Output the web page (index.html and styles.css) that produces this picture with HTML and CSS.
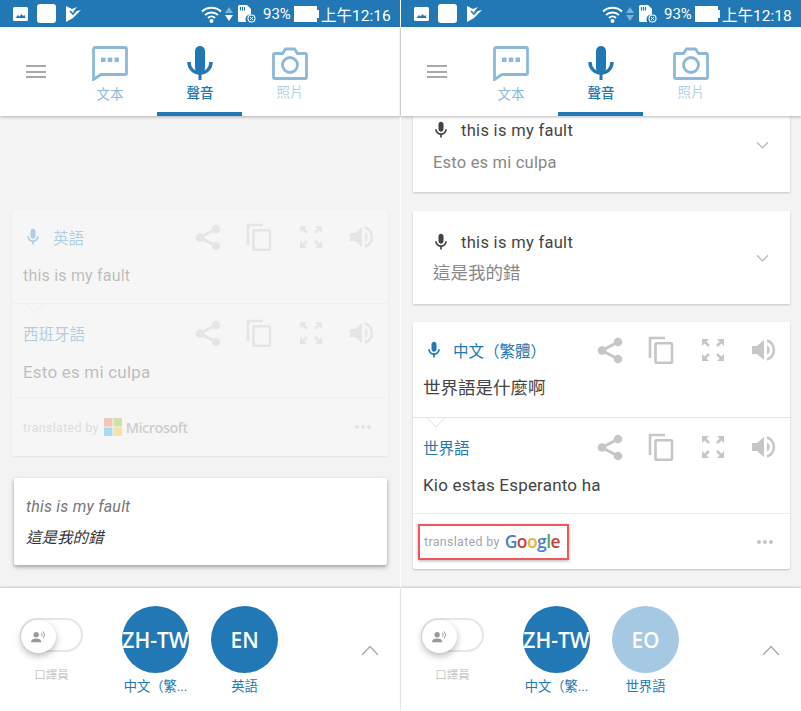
FILE: index.html
```html
<!DOCTYPE html>
<html lang="zh-Hant">
<head>
<meta charset="utf-8">
<title>Translator</title>
<link rel="stylesheet" href="styles.css">
</head>
<body>
<svg class="defs" aria-hidden="true">
  <symbol id="i-share" viewBox="0 0 26 28"><path d="M21 6 5 14.500 21 23" fill="none" stroke="currentColor" stroke-width="3"/><circle cx="5" cy="14.500" r="4.300" fill="currentColor"/><circle cx="21" cy="6" r="4.300" fill="currentColor"/><circle cx="21" cy="23" r="4.300" fill="currentColor"/></symbol>
  <symbol id="i-copy" viewBox="0 0 26 28"><path d="M2 22V2h15" fill="none" stroke="currentColor" stroke-width="2.600"/><rect x="7.500" y="7.300" width="16.500" height="19.500" fill="none" stroke="currentColor" stroke-width="2.600" rx="1"/></symbol>
  <symbol id="i-full" viewBox="0 0 26 26"><g fill="currentColor" stroke="currentColor"><path d="M2 2h7L2 9z" stroke="none"/><path d="M3 3l6 6" stroke-width="2.500"/><path d="M24 2h-7l7 7z" stroke="none"/><path d="M23 3l-6 6" stroke-width="2.500"/><path d="M2 24h7l-7-7z" stroke="none"/><path d="M3 23l6-6" stroke-width="2.500"/><path d="M24 24h-7l7-7z" stroke="none"/><path d="M23 23l-6-6" stroke-width="2.500"/></g></symbol>
  <symbol id="i-vol" viewBox="0 0 26 26"><path d="M1 9h5l7-6v20l-7-6H1z" fill="currentColor"/><path d="M16 8.500a5 5 0 0 1 0 9z" fill="currentColor"/><path d="M16 3.500a10 10 0 0 1 0 19" fill="none" stroke="currentColor" stroke-width="2.600"/></symbol>
  <symbol id="i-mic" viewBox="0 0 24 24"><path d="M12 14c1.660 0 3-1.340 3-3V5c0-1.660-1.340-3-3-3S9 3.340 9 5v6c0 1.660 1.340 3 3 3zm5-3c0 2.760-2.240 5-5 5s-5-2.240-5-5H5c0 3.530 2.610 6.430 6 6.920V21h2v-3.080c3.390-.49 6-3.390 6-6.920h-2z" fill="currentColor"/></symbol>
  <symbol id="i-chat" viewBox="0 0 36 35"><path d="M3 1.500h30a1.500 1.500 0 0 1 1.500 1.500v24a1.500 1.500 0 0 1-1.500 1.500H9l-7.500 5V3A1.500 1.500 0 0 1 3 1.500z" fill="none" stroke="currentColor" stroke-width="2.800"/><path d="M9 11.500h4.500V16H9zM15.800 11.500h4.500V16h-4.500zM22.500 11.500H27V16h-4.500z" fill="currentColor"/></symbol>
  <symbol id="i-tabmic" viewBox="0 0 26 34"><rect x="8" y="0" width="10" height="27" rx="5" fill="currentColor"/><path d="M2 16c0 7 5 11 11 11s11-4 11-11" fill="none" stroke="currentColor" stroke-width="3.400"/><path d="M13 26v8" stroke="currentColor" stroke-width="3"/></symbol>
  <symbol id="i-cam" viewBox="0 0 36 33"><path d="M3 6.500h7.500l3-4.500h9l3 4.500H33a1.500 1.500 0 0 1 1.500 1.500v22a1.500 1.500 0 0 1-1.500 1.500H3A1.500 1.500 0 0 1 1.500 30V8A1.500 1.500 0 0 1 3 6.500z" fill="none" stroke="currentColor" stroke-width="2.800"/><circle cx="18" cy="18" r="7.500" fill="none" stroke="currentColor" stroke-width="2.800"/></symbol>
  <symbol id="i-pic" viewBox="0 0 15 14"><rect width="15" height="14" rx="1.500" fill="#fff"/><path d="M2.500 11l2.500-3 1.500 1.500L8.500 7l1.500 2 1.500-1 1 3z" fill="#2178b5"/></symbol>
  <symbol id="i-flag" viewBox="0 0 15 16"><path d="M0 0l6 3 5-2-4 5 8-2-8 8-7 4z" fill="#fff"/><path d="M4 5l3 3 6-7" fill="none" stroke="#2178b5" stroke-width="1.600"/></symbol>
  <symbol id="i-wifi" viewBox="0 0 21 18"><path d="M1 6.500a14 14 0 0 1 19 0M4 10a9.500 9.500 0 0 1 13 0M7 13a5 5 0 0 1 7 0" fill="none" stroke="#fff" stroke-width="2"/><circle cx="10.500" cy="16" r="2" fill="#fff"/></symbol>
  <symbol id="i-sd" viewBox="0 0 18 18"><path d="M0 1.500A1.500 1.500 0 0 1 1.500 0H9l4 4v5.500A5 5 0 0 0 8 17H1.500A1.500 1.500 0 0 1 0 15.500z" fill="#fff"/><path d="M2.500 2v3.500M4.500 2v3.500M6.500 2v3.500" stroke="#2178b5" stroke-width="1.200"/><circle cx="13.500" cy="13.500" r="3.500" fill="none" stroke="#fff" stroke-width="1.100"/><path d="M12 12l3 3M15 12l-3 3" stroke="#fff"/></symbol>
  <symbol id="i-person" viewBox="0 0 16 12"><circle cx="5.500" cy="3.500" r="2.800" fill="currentColor"/><path d="M0 11.500c0-3 3-4 5.500-4s5.500 1 5.500 4z" fill="currentColor"/><path d="M11 1.500a3 3 0 0 1 0 4M13 0a6 6 0 0 1 0 7.500" fill="none" stroke="currentColor"/></symbol>
</svg>

<section class="phone">
  <header class="status">
    <svg class="st-pic"><use href="#i-pic"/></svg>
    <span class="st-square"></span>
    <svg class="st-flag"><use href="#i-flag"/></svg>
    <svg class="st-wifi"><use href="#i-wifi"/></svg>
    <span class="st-arrows"><i class="up dim"></i><i class="down"></i></span>
    <svg class="st-sd"><use href="#i-sd"/></svg>
    <span class="st-pct">93%</span>
    <span class="st-batt"></span>
    <span class="st-time">上午12:16</span>
  </header>
  <nav class="tabs">
    <span class="burger"><i></i><i></i><i></i></span>
    <div class="tab tab-text"><svg class="ic-chat"><use href="#i-chat"/></svg><span>文本</span></div>
    <div class="tab tab-on"><svg class="ic-tabmic"><use href="#i-tabmic"/></svg><span>聲音</span></div>
    <div class="tab tab-photo"><svg class="ic-cam"><use href="#i-cam"/></svg><span>照片</span></div>
  </nav>
  <main class="content content-left">
    <article class="card faded compact">
      <div class="row"><svg class="mic"><use href="#i-mic"/></svg><span class="lang">英語</span>
        <span class="tools"><svg><use href="#i-share"/></svg><svg><use href="#i-copy"/></svg><svg><use href="#i-full"/></svg><svg><use href="#i-vol"/></svg></span></div>
      <p class="phrase">this is my fault</p>
      <div class="notched row row2"><span class="lang lang-flush">西班牙語</span>
        <span class="tools"><svg><use href="#i-share"/></svg><svg><use href="#i-copy"/></svg><svg><use href="#i-full"/></svg><svg><use href="#i-vol"/></svg></span></div>
      <p class="phrase phrase-lg">Esto es mi culpa</p>
      <footer class="foot foot-tall">
        <span class="credit"><span class="by">translated by</span>
          <svg class="ms" viewBox="0 0 18 18"><rect width="8.500" height="8.500" fill="#e8603c"/><rect x="9.500" width="8.500" height="8.500" fill="#7fba00"/><rect y="9.500" width="8.500" height="8.500" fill="#00a4ef"/><rect x="9.500" y="9.500" width="8.500" height="8.500" fill="#ffb900"/></svg>
          <span class="ms-word">Microsoft</span></span>
        <span class="dots"><i></i><i></i><i></i></span>
      </footer>
    </article>
    <article class="prompt">
      <p class="prompt-en">this is my fault</p>
      <p class="prompt-zh">這是我的錯</p>
    </article>
  </main>
  <footer class="bar">
    <div class="toggle-wrap"><span class="toggle"><span class="knob"><svg><use href="#i-person"/></svg></span></span><span class="toggle-label">口譯員</span></div>
    <div class="langs">
      <div class="lang-item"><span class="circle">ZH-TW</span><span class="lang-name">中文（繁...</span></div>
      <div class="lang-item"><span class="circle">EN</span><span class="lang-name">英語</span></div>
    </div>
    <svg class="chev" viewBox="0 0 18 11"><path d="M1 10l8-8.500L17 10" fill="none" stroke="currentColor" stroke-width="1.400"/></svg>
  </footer>
</section>

<section class="phone">
  <header class="status">
    <svg class="st-pic"><use href="#i-pic"/></svg>
    <span class="st-square"></span>
    <svg class="st-flag"><use href="#i-flag"/></svg>
    <svg class="st-wifi"><use href="#i-wifi"/></svg>
    <span class="st-arrows"><i class="up dim"></i><i class="down dim"></i></span>
    <svg class="st-sd"><use href="#i-sd"/></svg>
    <span class="st-pct">93%</span>
    <span class="st-batt"></span>
    <span class="st-time">上午12:18</span>
  </header>
  <nav class="tabs">
    <span class="burger"><i></i><i></i><i></i></span>
    <div class="tab tab-text"><svg class="ic-chat"><use href="#i-chat"/></svg><span>文本</span></div>
    <div class="tab tab-on"><svg class="ic-tabmic"><use href="#i-tabmic"/></svg><span>聲音</span></div>
    <div class="tab tab-photo"><svg class="ic-cam"><use href="#i-cam"/></svg><span>照片</span></div>
  </nav>
  <main class="content">
    <article class="mini mini-cut">
      <div class="mini-body"><div class="mini-head"><svg class="mic mic-dark"><use href="#i-mic"/></svg><span>this is my fault</span></div><p class="mini-text">Esto es mi culpa</p></div>
      <svg class="mini-chev" viewBox="0 0 14 8"><path d="M1 1l6 6 6-6" fill="none" stroke="currentColor" stroke-width="1.300"/></svg>
    </article>
    <article class="mini">
      <div class="mini-body"><div class="mini-head"><svg class="mic mic-dark"><use href="#i-mic"/></svg><span>this is my fault</span></div><p class="mini-text mini-zh">這是我的錯</p></div>
      <svg class="mini-chev" viewBox="0 0 14 8"><path d="M1 1l6 6 6-6" fill="none" stroke="currentColor" stroke-width="1.300"/></svg>
    </article>
    <article class="card">
      <div class="row"><svg class="mic"><use href="#i-mic"/></svg><span class="lang">中文（繁體）</span>
        <span class="tools"><svg><use href="#i-share"/></svg><svg><use href="#i-copy"/></svg><svg><use href="#i-full"/></svg><svg><use href="#i-vol"/></svg></span></div>
      <p class="phrase phrase-zh">世界語是什麼啊</p>
      <div class="notched row row2"><span class="lang lang-flush">世界語</span>
        <span class="tools"><svg><use href="#i-share"/></svg><svg><use href="#i-copy"/></svg><svg><use href="#i-full"/></svg><svg><use href="#i-vol"/></svg></span></div>
      <p class="phrase phrase-lg">Kio estas Esperanto ha</p>
      <footer class="foot">
        <span class="credit credit-boxed"><span class="by">translated by</span>
          <span class="google"><b class="g-b">G</b><b class="g-r">o</b><b class="g-y">o</b><b class="g-b">g</b><b class="g-g">l</b><b class="g-r">e</b></span></span>
        <span class="dots"><i></i><i></i><i></i></span>
      </footer>
    </article>
  </main>
  <footer class="bar">
    <div class="toggle-wrap"><span class="toggle"><span class="knob"><svg><use href="#i-person"/></svg></span></span><span class="toggle-label">口譯員</span></div>
    <div class="langs">
      <div class="lang-item"><span class="circle">ZH-TW</span><span class="lang-name">中文（繁...</span></div>
      <div class="lang-item"><span class="circle circle-light">EO</span><span class="lang-name">世界語</span></div>
    </div>
    <svg class="chev" viewBox="0 0 18 11"><path d="M1 10l8-8.500L17 10" fill="none" stroke="currentColor" stroke-width="1.400"/></svg>
  </footer>
</section>
</body>
</html>
```

FILE: styles.css
```css
* { box-sizing: border-box; }
html, body { margin: 0; height: 100%; background: #fff; }
body {
  display: flex;
  gap: 1px;
  width: 801px;
  height: 711px;
  overflow: hidden;
  font-family: Roboto, "Noto Sans CJK TC", sans-serif;
}
.defs { width: 0; height: 0; position: absolute; }
p { margin: 0; }
i { display: block; }

.phone { width: 400px; height: 711px; display: flex; flex-direction: column; flex: none; }

/* status bar */
.status {
  height: 27px; flex: none; background: #2178b5; color: #fff;
  display: flex; align-items: center; padding-left: 13px;
}
.st-pic { width: 15px; height: 14px; margin-top: 1px; }
.st-square { width: 19px; height: 19px; background: #fff; border-radius: 3px; margin-left: 9px; }
.st-flag { width: 15px; height: 16px; margin-left: 10px; }
.st-wifi { width: 21px; height: 18px; margin-left: 120px; }
.st-arrows { display: flex; flex-direction: column; gap: 2px; margin-left: 3px; width: 8px; }
.st-arrows .up { border: 4px solid transparent; border-top: 0; border-bottom: 6px solid #fff; }
.st-arrows .down { border: 4px solid transparent; border-bottom: 0; border-top: 6px solid #fff; }
.st-arrows .dim.up { border-bottom-color: #7fb0d5; }
.st-arrows .dim.down { border-top-color: #7fb0d5; }
.st-sd { width: 18px; height: 18px; margin-left: 5px; }
.st-pct { font-size: 15px; margin-left: 7px; width: 31px; }
.st-batt { width: 23px; height: 16px; background: #fff; position: relative; margin-right: 4px; }
.st-batt::after { content: ""; position: absolute; left: 23px; top: 4px; width: 2px; height: 8px; background: #fff; }
.st-time { font-size: 15.500px; white-space: nowrap; }

/* tab bar */
.tabs {
  height: 89px; flex: none; background: #fff; display: flex; padding-left: 26px;
  position: relative; z-index: 2; box-shadow: 0 1px 3px rgba(0,0,0,.28);
}
.burger { width: 20px; margin-top: 38px; margin-right: 19px; display: flex; flex-direction: column; gap: 3.500px; }
.burger i { height: 2px; background: #a8a8a8; }
.tab { width: 90px; display: flex; flex-direction: column; align-items: center; font-size: 13.500px; position: relative; }
.tab-text { color: #8db8d8; }
.tab-text span { margin-top: 2px; }
.ic-chat { width: 36px; height: 35px; margin-top: 19px; }
.tab-on { color: #2178b5; font-weight: 500; }
.tab-on::after { content: ""; position: absolute; left: 2px; right: 3px; bottom: 0; height: 4px; background: #2178b5; }
.ic-tabmic { width: 26px; height: 34px; margin-top: 19px; }
.tab-on span { margin-top: 2px; }
.tab-photo { color: #8db8d8; }
.tab-photo span { color: #b3cfe3; margin-top: 1px; }
.ic-cam { width: 36px; height: 33px; margin-top: 20px; }

/* content area */
.content {
  flex: 1; min-height: 0; background: #f3f3f3; overflow: hidden;
  padding: 0 11px 0 12px; display: flex; flex-direction: column;
}
.content-left { padding: 94px 12px 0; }

.card { background: #fff; box-shadow: 0 1px 2px rgba(0,0,0,.22); border-radius: 2px; height: 247px; margin-top: 18px; flex: none; }
.card.faded { opacity: .3; margin-top: 0; height: 246px; }
.row { display: flex; align-items: center; height: 56px; padding: 0 13px 0 11px; }
.row2 { height: 58px; }
.compact .row { height: 53px; }
.compact .row2 { height: 59px; }
.mic { width: 20px; height: 20px; color: #2178b5; flex: none; }
.lang { color: #2178b5; font-size: 15.500px; margin-left: 9px; }
.lang-flush { margin-left: -1px; }
.compact .lang { margin-left: 10px; }
.compact .lang-flush { margin-left: 0; }
.tools { margin-left: auto; display: flex; gap: 25.500px; color: #c6c6c6; }
.tools svg { width: 26px; height: 28px; display: block; }
.phrase { font-size: 16px; line-height: 20px; color: #444; padding: 0 11px; height: 39px; letter-spacing: .2px; }
.phrase-zh { font-size: 17.500px; letter-spacing: 0; padding-left: 10px; }
.phrase-lg { font-size: 17px; height: 38px; padding-left: 10px; }
.compact .phrase { height: 40px; padding-top: 3px; }
.compact .phrase-lg { height: 35px; padding: 0 11px; }
.notched { border-top: 1px solid #e6e6e6; position: relative; }
.notched::before {
  content: ""; position: absolute; left: 16px; top: -1px; width: 13px; height: 13px;
  background: #fff; border: 1px solid #e0e0e0; border-top: 0; border-left: 0;
  transform: translateY(-6px) rotate(45deg); clip-path: polygon(100% 0, 100% 100%, 0 100%);
}
.foot {
  border-top: 1px solid #ececec; height: 56px; display: flex; align-items: center;
  justify-content: space-between; padding: 0 17px 0 5px;
}
.foot-tall { height: 59px; padding-left: 11px; }
.credit { display: flex; align-items: center; gap: 5px; white-space: nowrap; }
.credit-boxed { border: 2px solid #f0575a; height: 36px; padding: 0 0 0 4px; width: 151px; box-shadow: 0 1px 3px rgba(0,0,0,.3); }
.by { font-size: 12.500px; color: #a6a6a6; letter-spacing: .3px; }
.ms { width: 18px; height: 18px; }
.ms-word { font-family: "Open Sans", sans-serif; font-size: 14.500px; font-weight: 600; color: #777; letter-spacing: -.5px; margin-left: -1px; }
.google { font-family: "Open Sans", sans-serif; font-size: 17.500px; line-height: 1; letter-spacing: -.6px; }
.google b { font-weight: 600; }
.g-b { color: #4a7fcb; }
.g-r { color: #c8423b; }
.g-y { color: #e7b52c; }
.g-g { color: #55a35c; }
.dots { display: flex; gap: 2px; }
.dots i { width: 4px; height: 4px; border-radius: 50%; background: #c4c4c4; }

/* collapsed rows */
.mini {
  background: #fff; box-shadow: 0 1px 2px rgba(0,0,0,.2); height: 93px; margin-top: 19px; flex: none;
  display: flex; align-items: center; justify-content: space-between; padding: 0 21px 0 20px;
}
.mini-cut { height: 76px; margin-top: 0; align-items: flex-start; }
.mini-cut .mini-body { margin-top: 2px; }
.mini-cut .mini-chev { margin-top: 25px; }
.mini-cut .mini-text { margin-top: 9px; }
.mini-head { display: flex; align-items: center; height: 24px; font-size: 16.500px; color: #444; letter-spacing: .3px; }
.mic-dark { color: #444; margin-right: 10px; margin-left: -2px; }
.mini-text { font-size: 16.500px; line-height: 24px; color: #888; margin-top: 8px; letter-spacing: .2px; }
.mini-zh { font-size: 17.500px; letter-spacing: 0; margin-top: 7px; }
.mini-chev { width: 13px; height: 8px; color: #bbb; }

.prompt {
  background: #fff; margin: 22px 1px 0 2px; height: 87px; padding: 17px 12px 0; flex: none;
  box-shadow: 0 2px 4px rgba(0,0,0,.35); border-radius: 2px; font-style: italic;
}
.prompt-en { font-size: 16px; line-height: 24px; color: #777; letter-spacing: .2px; }
.prompt-zh { font-size: 15.500px; line-height: 24px; color: #333; margin-top: 7px; }

/* bottom bar */
.bar {
  height: 123px; flex: none; background: #fff; display: flex; align-items: flex-start;
  box-shadow: 0 -1px 2px rgba(0,0,0,.18); position: relative; padding-left: 20px;
}
.toggle-wrap { width: 63px; margin-top: 30px; display: flex; flex-direction: column; align-items: center; }
.toggle { display: block; width: 63px; height: 34px; border: 2px solid #e6e6e6; border-radius: 17px; }
.knob {
  width: 35px; height: 33px; border-radius: 50%; background: #fff; margin: 0 0 0 -1px; display: flex;
  align-items: center; justify-content: center; box-shadow: 0 3px 7px rgba(0,0,0,.28); color: #999;
}
.knob svg { width: 15px; height: 12px; }
.toggle-label { font-size: 11.500px; color: #c8c8c8; margin-top: 14px; }
.langs { display: flex; gap: 22px; margin-left: 39px; margin-top: 18px; }
.lang-item { width: 67px; display: flex; flex-direction: column; align-items: center; }
.circle {
  width: 67px; height: 67px; border-radius: 50%; background: #2178b5; color: #fff; font-family: "Open Sans", sans-serif;
  font-size: 21px; font-weight: 600; display: flex; align-items: center; justify-content: center; white-space: nowrap;
}
.circle-light { background: #a5c8e3; }
.lang-name { font-size: 13.300px; color: #2178b5; margin-top: 3px; white-space: nowrap; }
.chev { position: absolute; left: 361px; top: 57px; width: 18px; height: 11px; color: #aaa; }
```
